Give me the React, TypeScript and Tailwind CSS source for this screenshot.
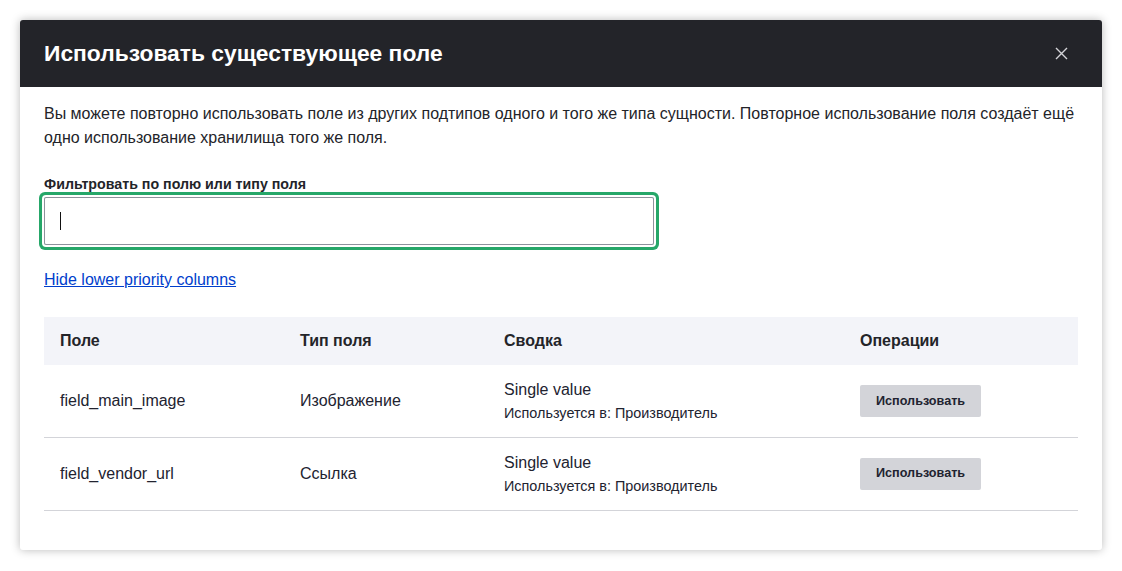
import { useState } from 'react'

type Row = {
  name: string
  type: string
}

const rows: Row[] = [
  { name: 'field_main_image', type: 'Изображение' },
  { name: 'field_vendor_url', type: 'Ссылка' },
]

export default function App() {
  const [filter, setFilter] = useState('')

  return (
    <div className="min-h-[571px] bg-white p-[20px] font-['Liberation_Sans',Arial,sans-serif] text-[#232429]">
      <div className="w-[1082px] h-[530px] rounded-[3px] bg-white shadow-[0_0_10px_rgba(0,0,0,0.28)] overflow-hidden">
        {/* шапка диалога */}
        <div className="h-[67px] bg-[#232429] flex items-center justify-between pl-[24px] pr-[31px]">
          <h1 className="text-[22.8px] font-bold text-white leading-none">
            Использовать существующее поле
          </h1>
          <button className="w-[20px] h-[20px] flex items-center justify-center text-[#d4d4d8]">
            <svg width="13" height="13" viewBox="0 0 13 13" fill="none">
              <path d="M1 1L12 12M12 1L1 12" stroke="currentColor" strokeWidth="1.4" />
            </svg>
          </button>
        </div>

        <div className="px-[24px] pt-[15px]">
          <p className="text-[16px] leading-[24px]">
            Вы можете повторно использовать поле из других подтипов одного и того же типа сущности. Повторное использование поля создаёт ещё одно использование хранилища того же поля.
          </p>

          <div className="mt-[25px]">
            <label className="block text-[14.22px] font-bold leading-[18px] mb-[4px]">
              Фильтровать по полю или типу поля
            </label>
            <div className="relative w-[610px]">
              <input
                value={filter}
                onChange={(e) => setFilter(e.target.value)}
                className="block w-[610px] h-[48px] rounded-[2px] border border-[#8e929c] px-[15px] text-[16px] outline-none shadow-[0_0_0_2px_#fff,0_0_0_5px_#26a769] caret-transparent"
              />
              {/* курсор */}
              {filter === '' && (
                <span className="absolute left-[16px] top-[15px] w-[1px] h-[18px] bg-[#111]" />
              )}
            </div>
          </div>

          <div className="mt-[23px] leading-[24px]">
            <a href="#" className="text-[16px] text-[#003ecc] underline">
              Hide lower priority columns
            </a>
          </div>

          <table className="mt-[25px] w-[1034px] border-collapse text-left">
            <thead>
              <tr className="bg-[#f3f4f9] h-[48px]">
                <th className="w-[240px] pl-[16px] text-[16px] font-bold">Поле</th>
                <th className="w-[204px] pl-[16px] text-[16px] font-bold">Тип поля</th>
                <th className="w-[356px] pl-[16px] text-[16px] font-bold">Сводка</th>
                <th className="pl-[16px] text-[16px] font-bold">Операции</th>
              </tr>
            </thead>
            <tbody>
              {rows.map((row) => (
                <tr key={row.name} className="h-[72.5px] border-b border-[#d3d4d9]">
                  <td className="pl-[16px] text-[16px] text-[#222330]">{row.name}</td>
                  <td className="pl-[16px] text-[16px] text-[#222330]">{row.type}</td>
                  <td className="pl-[16px] text-[#222330]">
                    <div className="text-[16px] leading-[20px]">Single value</div>
                    <div className="text-[14.4px] leading-[18px] mt-[4px]">Используется в: Производитель</div>
                  </td>
                  <td className="pl-[16px]">
                    <button className="h-[32px] px-[16px] rounded-[2px] bg-[#d3d4d9] text-[12.64px] font-bold text-[#222330]">
                      Использовать
                    </button>
                  </td>
                </tr>
              ))}
            </tbody>
          </table>
        </div>
      </div>
    </div>
  )
}
